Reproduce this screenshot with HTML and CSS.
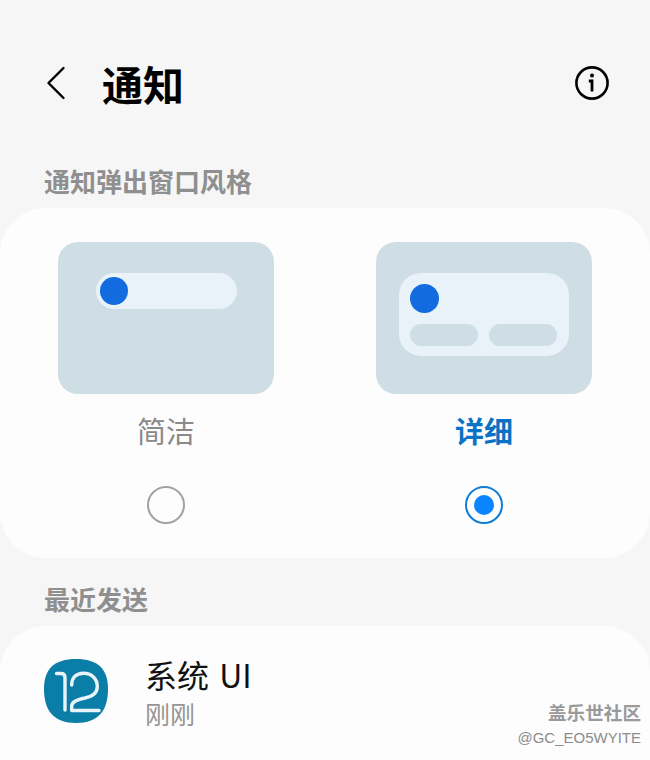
FILE: index.html
```html
<!DOCTYPE html>
<html lang="zh-CN">
<head>
    <meta charset="UTF-8">
    <meta name="viewport" content="width=device-width, initial-scale=1.0">
    <title>通知</title>
    <link rel="stylesheet" href="styles.css">
</head>
<body>
<div class="screen">
    <div class="app-bar">
        <svg class="back-icon" width="20" height="36" viewBox="0 0 20 36">
            <path d="M17.5 3 L2.5 18 L17.5 33" fill="none" stroke="#000" stroke-width="2.4" stroke-linecap="round" stroke-linejoin="round"/>
        </svg>
        <h1 class="app-title">通知</h1>
        <svg class="info-icon" width="36" height="36" viewBox="0 0 36 36">
            <circle cx="18" cy="18" r="15.6" fill="none" stroke="#000" stroke-width="2.6"/>
            <circle cx="18" cy="10.6" r="2" fill="#000"/>
            <path d="M14.8 16 H18 V26.6" fill="none" stroke="#000" stroke-width="2.8"/>
        </svg>
    </div>

    <h2 class="section-title">通知弹出窗口风格</h2>
    <div class="card style-card">
        <div class="style-option">
            <div class="preview">
                <div class="brief-pill"><span class="dot"></span></div>
            </div>
            <div class="style-label">简洁</div>
            <span class="radio"></span>
        </div>
        <div class="style-option">
            <div class="preview">
                <div class="detail-box">
                    <span class="dot dot-large"></span>
                    <div class="detail-actions">
                        <span class="action-pill"></span>
                        <span class="action-pill"></span>
                    </div>
                </div>
            </div>
            <div class="style-label selected">详细</div>
            <span class="radio radio-on"></span>
        </div>
    </div>

    <h2 class="section-title recent-title">最近发送</h2>
    <div class="card recent-card">
        <svg class="app-icon" width="64" height="64" viewBox="0 0 64 64">
            <path d="M32 0 C54 0 64 10 64 30 C64 52 54 64 32 64 C10 64 0 52 0 30 C0 10 10 0 32 0 Z" fill="#0b7ea8"/>
            <path d="M12.5 14.5 H17 C19.5 14.5 21 16 21 18.5 V51" fill="none" stroke="#e8f4f8" stroke-width="3.4" stroke-linecap="round"/>
            <path d="M27.7 26 C27.7 18.5 32.5 14.3 39.5 14.3 C47.5 14.3 53.3 19.5 53.3 27.5 C53.3 34.5 48 37.5 41 39 C33 40.5 27.7 42.5 27.7 47 V51.5 H55" fill="none" stroke="#e8f4f8" stroke-width="3.4" stroke-linecap="round" stroke-linejoin="round"/>
        </svg>
        <div class="app-text">
            <div class="app-name">系统 UI</div>
            <div class="app-time">刚刚</div>
        </div>
    </div>

    <div class="watermark">
        <div class="watermark-name">盖乐世社区</div>
        <div class="watermark-user">@GC_EO5WYITE</div>
    </div>
</div>
</body>
</html>
```

FILE: styles.css
```css
html, body {
    margin: 0;
    padding: 0;
}

body {
    font-family: "Noto Sans CJK SC", "Noto Sans", sans-serif;
    background-color: #f6f6f6;
}

.screen {
    position: relative;
    width: 650px;
    height: 760px;
    overflow: hidden;
}

.app-bar {
    display: flex;
    align-items: center;
    height: 36px;
    padding: 65px 40px 0 46px;
}

.back-icon {
    flex: none;
}

.app-title {
    margin: 0 0 0 36px;
    font-size: 41px;
    line-height: 40px;
    font-weight: 700;
    color: #000;
}

.info-icon {
    margin-left: auto;
    margin-top: -1px;
}

.section-title {
    margin: 0;
    padding-left: 44px;
    font-size: 26px;
    line-height: 32px;
    font-weight: 700;
    color: #8f8f8f;
}

.app-bar + .section-title {
    margin-top: 64px;
}

.card {
    background-color: #fdfdfd;
    border-radius: 46px;
}

.style-card {
    display: flex;
    height: 316px;
    margin-top: 11px;
    padding: 34px 58px 0;
    gap: 102px;
}

.style-option {
    display: flex;
    flex-direction: column;
    align-items: center;
    width: 216px;
}

.preview {
    box-sizing: border-box;
    width: 216px;
    height: 152px;
    padding-top: 31px;
    background-color: #cfdde4;
    border-radius: 20px;
}

.brief-pill {
    display: flex;
    align-items: center;
    box-sizing: border-box;
    width: 141px;
    height: 36px;
    margin-left: 38px;
    padding-left: 4px;
    background-color: #e9f2f8;
    border-radius: 18px;
}

.dot {
    display: block;
    width: 28px;
    height: 28px;
    background-color: #126ce0;
    border-radius: 50%;
}

.dot-large {
    width: 29px;
    height: 29px;
}

.detail-box {
    box-sizing: border-box;
    width: 170px;
    height: 83px;
    margin-left: 23px;
    padding: 11px 11px 0;
    background-color: #e9f2f8;
    border-radius: 22px;
}

.detail-actions {
    display: flex;
    gap: 11px;
    margin-top: 11px;
}

.action-pill {
    display: block;
    width: 68px;
    height: 22px;
    background-color: #cfdde4;
    border-radius: 11px;
}

.style-label {
    margin-top: 15px;
    font-size: 29px;
    line-height: 42px;
    color: #8a8a8a;
}

.style-label.selected {
    font-weight: 700;
    color: #0a72c4;
}

.radio {
    display: flex;
    align-items: center;
    justify-content: center;
    box-sizing: border-box;
    width: 38px;
    height: 38px;
    margin-top: 35px;
    border: 2px solid #a3a3a3;
    border-radius: 50%;
}

.radio-on {
    border-color: #0f7fd8;
}

.radio-on::after {
    content: "";
    width: 20px;
    height: 20px;
    background-color: #0a84ff;
    border-radius: 50%;
}

.recent-title {
    margin-top: 25px;
}

.recent-card {
    display: flex;
    align-items: flex-start;
    height: 200px;
    margin-top: 11px;
    padding: 33px 0 0 44px;
}

.app-icon {
    flex: none;
}

.app-text {
    margin-left: 37px;
}

.app-name {
    margin-top: -4px;
    font-size: 32px;
    line-height: 38px;
    word-spacing: 3px;
    color: #111;
}

.app-time {
    font-size: 25px;
    line-height: 36px;
    margin-top: 2px;
    color: #959595;
}

.watermark {
    position: absolute;
    right: 9px;
    top: 699px;
    text-align: right;
    color: #8c8c8c;
}

.watermark-name {
    font-size: 18.6px;
    line-height: 26px;
    font-weight: 700;
    color: #9a9a9a;
}

.watermark-user {
    font-family: "Liberation Sans", sans-serif;
    font-size: 15px;
    line-height: 25px;
}
```
